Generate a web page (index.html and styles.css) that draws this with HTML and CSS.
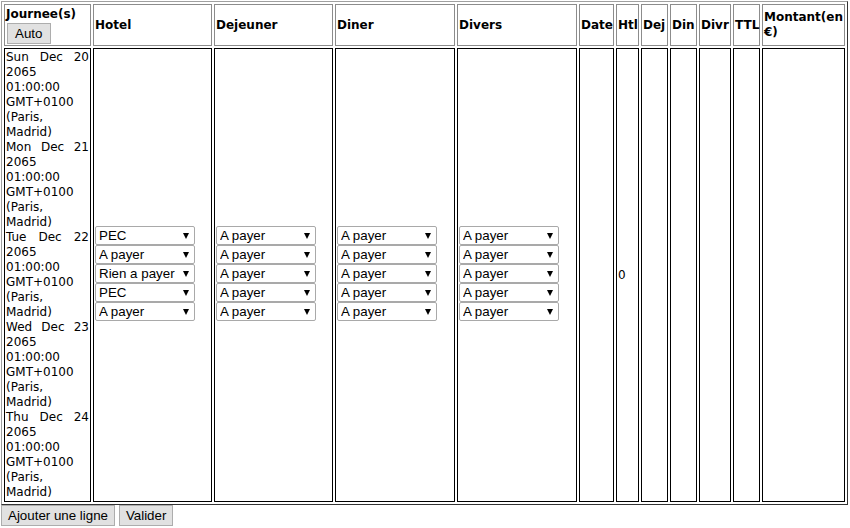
FILE: index.html
```html
<!DOCTYPE html>
<html>
<head>
<meta charset="utf-8">
<link rel="stylesheet" href="styles.css">
</head>
<body>
<table class="grid">
  <tr>
    <th class="c-day">Journee(s)<button class="btn btn-auto">Auto</button></th>
    <th class="c-sel">Hotel</th>
    <th class="c-sel">Dejeuner</th>
    <th class="c-sel2">Diner</th>
    <th class="c-sel2">Divers</th>
    <th class="c-date">Date</th>
    <th class="c-htl">Htl</th>
    <th class="c-dej">Dej</th>
    <th class="c-din">Din</th>
    <th class="c-divr">Divr</th>
    <th class="c-ttl">TTL</th>
    <th class="c-mnt">Montant(en €)</th>
  </tr>
  <tr>
    <td>
      <div class="day">Sun Dec 20 2065 01:00:00 GMT+0100 (Paris, Madrid)</div>
      <div class="day">Mon Dec 21 2065 01:00:00 GMT+0100 (Paris, Madrid)</div>
      <div class="day">Tue Dec 22 2065 01:00:00 GMT+0100 (Paris, Madrid)</div>
      <div class="day">Wed Dec 23 2065 01:00:00 GMT+0100 (Paris, Madrid)</div>
      <div class="day">Thu Dec 24 2065 01:00:00 GMT+0100 (Paris, Madrid)</div>
    </td>
    <td class="pick">
      <span class="sel"><select><option>PEC</option></select></span>
      <span class="sel"><select><option>A payer</option></select></span>
      <span class="sel"><select><option>Rien a payer</option></select></span>
      <span class="sel"><select><option>PEC</option></select></span>
      <span class="sel"><select><option>A payer</option></select></span>
    </td>
    <td class="pick">
      <span class="sel"><select><option>A payer</option></select></span>
      <span class="sel"><select><option>A payer</option></select></span>
      <span class="sel"><select><option>A payer</option></select></span>
      <span class="sel"><select><option>A payer</option></select></span>
      <span class="sel"><select><option>A payer</option></select></span>
    </td>
    <td class="pick">
      <span class="sel"><select><option>A payer</option></select></span>
      <span class="sel"><select><option>A payer</option></select></span>
      <span class="sel"><select><option>A payer</option></select></span>
      <span class="sel"><select><option>A payer</option></select></span>
      <span class="sel"><select><option>A payer</option></select></span>
    </td>
    <td class="pick">
      <span class="sel"><select><option>A payer</option></select></span>
      <span class="sel"><select><option>A payer</option></select></span>
      <span class="sel"><select><option>A payer</option></select></span>
      <span class="sel"><select><option>A payer</option></select></span>
      <span class="sel"><select><option>A payer</option></select></span>
    </td>
    <td></td>
    <td>0</td>
    <td></td>
    <td></td>
    <td></td>
    <td></td>
    <td></td>
  </tr>
</table>
<div class="actions"><button class="btn">Ajouter une ligne</button> <button class="btn">Valider</button></div>
</body>
</html>
```

FILE: styles.css
```css
body {
  margin: 1px;
  font-family: "DejaVu Sans", Verdana, sans-serif;
  font-size: 12px;
  color: #000;
  background: #fff;
}

.grid {
  width: 847px;
  table-layout: fixed;
  border-collapse: separate;
  border-spacing: 2px;
  border: 1px solid;
  border-color: #a0a0a0 #333 #333 #a0a0a0;
}

.grid th {
  border: 1px solid #8c8c8c;
  padding: 1px;
  height: 38px;
  text-align: left;
  vertical-align: middle;
  font-weight: bold;
  line-height: 15px;
}

.grid td {
  border: 1px solid #000;
  padding: 1px;
  vertical-align: middle;
  line-height: 15px;
}

.grid td.pick {
  padding-bottom: 5px;
}

.c-day { width: 83px; }
.c-sel { width: 115px; }
.c-sel2 { width: 116px; }
.c-date { width: 31px; }
.c-htl { width: 19px; }
.c-dej { width: 23px; }
.c-din { width: 23px; }
.c-divr { width: 28px; }
.c-ttl { width: 23px; }
.c-mnt { width: 79px; }

.day {
  text-align: justify;
}

.sel {
  display: block;
  position: relative;
  width: 100px;
  height: 19px;
}

.sel select {
  appearance: none;
  -webkit-appearance: none;
  box-sizing: border-box;
  width: 100px;
  height: 19px;
  margin: 0;
  padding: 0 14px 0 3px;
  border: 1px solid #a9a9a9;
  border-radius: 2px;
  background: #fff;
  font-family: "Liberation Sans", Arial, sans-serif;
  font-size: 13.33px;
  color: #000;
  display: block;
}

.sel::after {
  content: "";
  position: absolute;
  right: 6px;
  top: 7px;
  width: 0;
  height: 0;
  border-left: 3.5px solid transparent;
  border-right: 3.5px solid transparent;
  border-top: 6px solid #000;
  pointer-events: none;
}

.btn {
  box-sizing: border-box;
  height: 21px;
  font-family: "Liberation Sans", Arial, sans-serif;
  font-size: 13.33px;
  line-height: 15px;
  color: #000;
  background: #e1e1e1;
  border: 1px solid #adadad;
  border-radius: 0;
  padding: 2px 6px;
  margin: 0;
  vertical-align: top;
}

.btn-auto {
  display: block;
  margin: 1px 0 0 1px;
  padding: 2px 8px 2px 7px;
}

.actions {
  height: 21px;
  line-height: 21px;
}
```
